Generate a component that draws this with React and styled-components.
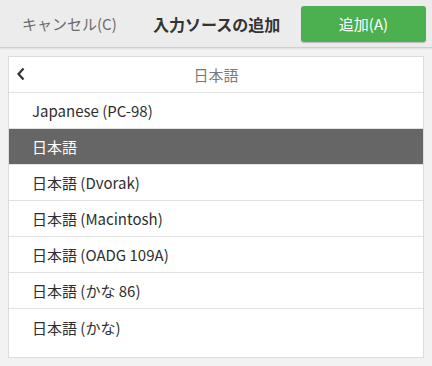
import React from 'react';
import styled, { createGlobalStyle } from 'styled-components';

const GlobalStyle = createGlobalStyle`
  html, body {
    margin: 0;
    padding: 0;
    background: #f2f2f2;
    font-family: "Noto Sans CJK JP", "Noto Sans", sans-serif;
  }
`;

const Page = styled.div`
  width: 432px;
  height: 366px;
  display: flex;
  flex-direction: column;
  background: #f2f2f2;
`;

const HeaderBar = styled.div`
  height: 48px;
  box-sizing: border-box;
  display: flex;
  align-items: center;
  background: #ececec;
  border-bottom: 1px solid #cfcfcf;
  box-shadow: 0 1px 2px rgba(0, 0, 0, 0.08);
  padding: 0 6px 0 22px;
`;

const CancelButton = styled.div`
  font-size: 15px;
  color: #6b6b6b;
  width: 131px;
`;

const Title = styled.div`
  flex: 1;
  font-size: 16px;
  font-weight: bold;
  color: #333333;
`;

const AddButton = styled.div`
  width: 125px;
  height: 36px;
  display: flex;
  align-items: center;
  justify-content: center;
  background: #4caf50;
  color: #ffffff;
  font-size: 15px;
  border-radius: 3px;
  box-shadow: 0 1px 1px rgba(0, 0, 0, 0.2);
`;

const Content = styled.div`
  flex: 1;
  padding: 8px;
`;

const Panel = styled.div`
  height: 302px;
  box-sizing: border-box;
  background: #ffffff;
  border: 1px solid #dcdcdc;
  display: flex;
  flex-direction: column;
`;

const PanelHeader = styled.div`
  height: 36px;
  box-sizing: border-box;
  border-bottom: 1px solid #e2e2e2;
  display: flex;
  align-items: center;
  position: relative;
  justify-content: center;
`;

const BackIcon = styled.svg`
  position: absolute;
  left: 7px;
  top: 10px;
`;

const PanelTitle = styled.div`
  font-size: 15px;
  color: #7a7a7a;
`;

const Row = styled.div`
  height: 36px;
  box-sizing: border-box;
  border-bottom: ${p => (p.$last ? 'none' : '1px solid #e2e2e2')};
  display: flex;
  align-items: center;
  padding-left: 23px;
  font-size: 15px;
  background: ${p => (p.$selected ? '#666666' : '#ffffff')};
  color: ${p => (p.$selected ? '#ffffff' : '#2e2e2e')};
`;

const items = [
  'Japanese (PC-98)',
  '日本語',
  '日本語 (Dvorak)',
  '日本語 (Macintosh)',
  '日本語 (OADG 109A)',
  '日本語 (かな 86)',
  '日本語 (かな)',
];

export default function App() {
  return (
    <Page>
      <GlobalStyle />
      <HeaderBar>
        <CancelButton>キャンセル(C)</CancelButton>
        <Title>入力ソースの追加</Title>
        <AddButton>追加(A)</AddButton>
      </HeaderBar>
      <Content>
        <Panel>
          <PanelHeader>
            <BackIcon width="10" height="14" viewBox="0 0 10 14">
              <path d="M7.5 1.5 L2.5 7 L7.5 12.5" fill="none" stroke="#333" strokeWidth="2.2" />
            </BackIcon>
            <PanelTitle>日本語</PanelTitle>
          </PanelHeader>
          {items.map((item, i) => (
            <Row key={item} $selected={i === 1} $last={i === items.length - 1}>
              {item}
            </Row>
          ))}
        </Panel>
      </Content>
    </Page>
  );
}
